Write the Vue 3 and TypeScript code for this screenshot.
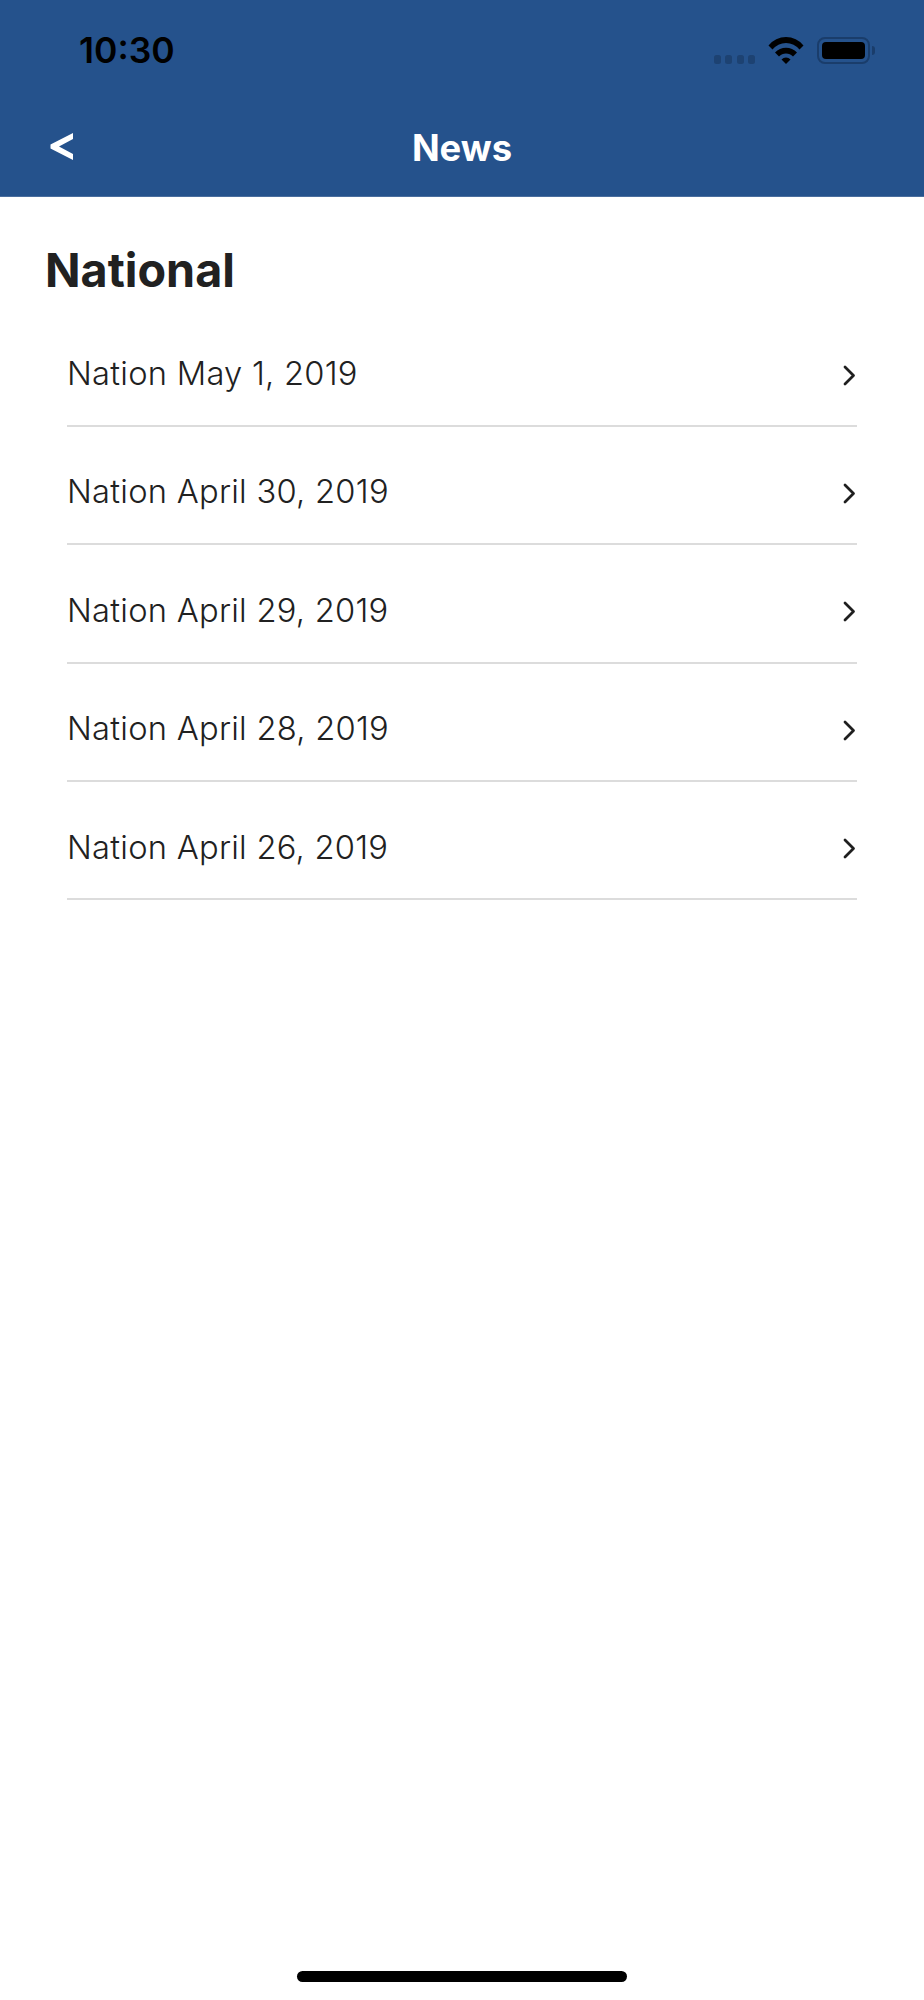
<script setup lang="ts">
const rows: string[] = [
  'Nation May 1, 2019',
  'Nation April 30, 2019',
  'Nation April 29, 2019',
  'Nation April 28, 2019',
  'Nation April 26, 2019',
]
</script>

<template>
  <div class="screen">
    <header class="header">
      <div class="status">
        <span class="time">10:30</span>
        <div class="indicators">
          <div class="dots"><i></i><i></i><i></i><i></i></div>
          <svg class="wifi" width="36" height="27" viewBox="0 0 36 27">
            <path d="M0.5 8.4 A22.5 22.5 0 0 1 35.5 8.4 L31.5 12.6 A17 17 0 0 0 4.5 12.6 Z" fill="#000" />
            <path d="M7 15.6 A15 15 0 0 1 29 15.6 L25 19.6 A9.5 9.5 0 0 0 11 19.6 Z" fill="#000" />
            <path d="M13.5 22.4 A6.4 6.4 0 0 1 22.5 22.4 L18 27 Z" fill="#000" />
          </svg>
          <div class="battery"><div class="battery-fill"></div></div>
          <div class="battery-tip"></div>
        </div>
      </div>
      <nav class="nav">
        <svg class="back" width="23" height="27" viewBox="0 0 23 27">
          <path d="M23 0 L23 6 L9 13.5 L23 21 L23 27 L0.5 15.5 L0.5 11.5 Z" fill="#fff" />
        </svg>
        <h1 class="nav-title">News</h1>
      </nav>
    </header>
    <main class="content">
      <h2 class="section">National</h2>
      <ul class="list">
        <li v-for="row in rows" :key="row" class="row">
          <span class="label">{{ row }}</span>
          <svg class="chev" width="13" height="21" viewBox="0 0 13 21">
            <path d="M2 2 L10.5 10.5 L2 19" fill="none" stroke="#1f1f1f" stroke-width="2.8" stroke-linecap="round" stroke-linejoin="round" />
          </svg>
        </li>
      </ul>
    </main>
    <div class="home-bar"></div>
  </div>
</template>

<style>
html, body { margin: 0; background: #fff; }
</style>

<style scoped>
.screen {
  width: 924px;
  height: 2000px;
  display: flex;
  flex-direction: column;
  background: #fff;
  font-family: Inter, "Liberation Sans", sans-serif;
  position: relative;
  overflow: hidden;
}
.header {
  height: 197px;
  background: #25528c;
  box-sizing: border-box;
  flex: none;
  border-bottom: 1px solid #4a6e9e;
}
.status {
  height: 100px;
  display: flex;
  justify-content: space-between;
  align-items: flex-start;
  padding: 37px 49px 0 79px;
  box-sizing: border-box;
}
.time {
  font-size: 35.5px;
  font-weight: 600;
  line-height: 27px;
  color: #000;
}
.indicators {
  display: flex;
  align-items: flex-start;
}
.dots {
  display: flex;
  gap: 4.5px;
  margin: 18px 13px 0 0;
}
.dots i {
  width: 7px;
  height: 9px;
  border-radius: 2.5px;
  background: #1d4272;
}
.battery {
  width: 53px;
  height: 27px;
  margin-left: 13px;
  box-sizing: border-box;
  border: 2px solid #1a3d6b;
  border-radius: 8px;
  padding: 3px;
}
.battery-fill {
  height: 100%;
  background: #000;
  border-radius: 4px;
}
.battery-tip {
  width: 3px;
  height: 9px;
  margin: 9px 0 0 2px;
  background: #1a3d6b;
  border-radius: 0 3px 3px 0;
}
.nav {
  height: 96px;
  position: relative;
  display: flex;
  align-items: flex-start;
  justify-content: center;
}
.back {
  position: absolute;
  left: 50px;
  top: 33px;
}
.nav-title {
  margin: 26px 0 0;
  font-size: 36.4px;
  line-height: 44px;
  font-weight: 700;
  color: #fff;
}
.content {
  padding: 0 67px 0 45px;
  flex: 1;
}
.section {
  margin: 45px 0 0;
  font-size: 46.7px;
  line-height: 56px;
  font-weight: 700;
  color: #212121;
}
.list {
  list-style: none;
  margin: 10.4px 0 0 22px;
  padding: 0;
}
.row {
  height: 118.4px;
  box-sizing: border-box;
  border-bottom: 2px solid #dcdcdc;
  display: flex;
  align-items: center;
  justify-content: space-between;
  padding: 15px 0 0 0;
}
.label {
  font-size: 32.7px;
  line-height: 40px;
  font-weight: 350;
  letter-spacing: 0.25px;
  color: #212121;
  margin-bottom: 2px;
}
.chev {
  margin: 2px 1px 0 0;
}
.home-bar {
  position: absolute;
  left: 297px;
  top: 1971px;
  width: 330px;
  height: 11px;
  border-radius: 6px;
  background: #000;
}
</style>
